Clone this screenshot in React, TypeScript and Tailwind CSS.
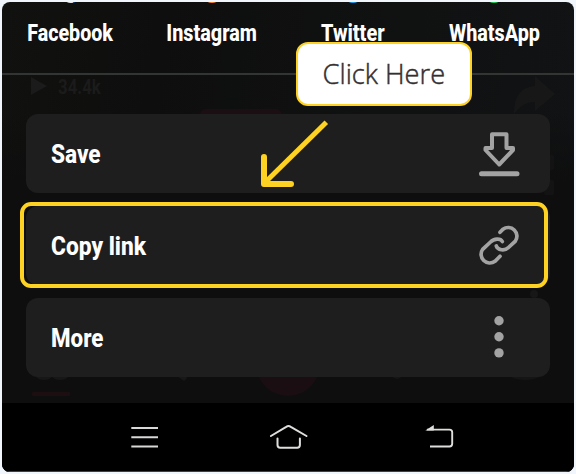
import type { ReactNode } from "react";

const condensed = "inline-block whitespace-nowrap font-['Roboto'] font-extrabold text-white";

function ShareTarget({ name, dot, scale }: { name: string; dot: string; scale: string }) {
  return (
    <div className="relative flex h-full w-[141px] justify-center pt-[18px]">
      <i className={`absolute -top-[19px] left-1/2 size-5 -translate-x-1/2 rounded-full ${dot}`} />
      <span className={`${condensed} h-7 text-[23px] leading-7 ${scale}`}>{name}</span>
    </div>
  );
}

function ActionRow({ label, scale, children }: { label: string; scale: string; children: ReactNode }) {
  return (
    <div className="flex h-[79px] items-center justify-between rounded-[12px] bg-[#1e1e1e] pr-[28px] pl-[25px]">
      <span className={`${condensed} origin-left pt-[2px] text-[25px] leading-8 ${scale}`}>{label}</span>
      {children}
    </div>
  );
}

/** Dimmed video feed controls showing through behind the sheet. */
function FeedBackdrop() {
  return (
    <div className="pointer-events-none absolute inset-0">
      <svg className="absolute inset-0" width="572" height="470" viewBox="2 2 572 470">
        <path d="M31 77l16 9-16 9z" fill="#1b1b1b" />
        <path d="M514 114c0-18 7-27 21-28v-10l20 18-20 17v-9c-9 0-15 4-21 12z" fill="#171717" />
        <rect x="200" y="109" width="82" height="20" rx="6" fill="#1b0f13" />
        <rect x="32" y="392" width="38" height="4" rx="1" fill="#1d0e12" />
        <circle cx="288" cy="364.500" r="31.500" fill="#1b0e12" />
        <ellipse cx="44" cy="376" rx="8" ry="4" fill="#171717" />
        <ellipse cx="60" cy="376" rx="8" ry="4" fill="#171717" />
        <path d="M177 376l7 5 3-3-3-4z" fill="#181818" />
        <ellipse cx="525" cy="370" rx="20" ry="10" fill="#151515" />
        <circle cx="397" cy="374" r="5" fill="#161616" />
        <circle cx="534" cy="294" r="4" fill="#171717" />
        <rect x="544" y="155" width="10" height="15" rx="2" fill="#131313" />
        <rect x="544" y="180" width="10" height="15" rx="2" fill="#131313" />
      </svg>
      <span className="absolute top-[71px] left-[55.500px] origin-left scale-x-[0.84] font-['Roboto'] text-[20px] leading-7 font-bold text-[#1b1b1b]">34.4k</span>
    </div>
  );
}

export default function App() {
  return (
    <div className="h-[474px] w-[576px] overflow-hidden bg-[#f1f6fc] p-[2px]">
      <div className="relative flex h-[470px] flex-col overflow-hidden rounded-[8px] bg-[linear-gradient(100deg,#11110f_0%,#0e0e0e_25%,#101111_60%,#111315_100%)]">
        <div className="absolute inset-x-0 top-[110px] bottom-0 bg-[linear-gradient(180deg,#0e0e0e00_0%,#0e0e0e_20%)]" />
        <FeedBackdrop />

        <header className="relative -ml-[2px] flex h-[73px] shrink-0 border-b-2 border-[#333434]">
          <ShareTarget name="Facebook" dot="bg-[linear-gradient(90deg,#eee_60%,#1778f2_60%)]" scale="scale-x-[0.855]" />
          <ShareTarget name="Instagram" dot="bg-[#f58529]" scale="scale-x-[0.86]" />
          <ShareTarget name="Twitter" dot="bg-[#1da1f2]" scale="scale-x-[0.865]" />
          <ShareTarget name="WhatsApp" dot="bg-[#16d45c]" scale="translate-x-[0.5px] scale-x-[0.86]" />
        </header>

        <main className="relative flex flex-col gap-[13px] px-6 pt-[39px]">
          <ActionRow label="Save" scale="scale-x-[0.905]">
            <svg width="46" height="47" viewBox="476 130 46 47" fill="none" stroke="#a3a3a3" strokeLinecap="round" strokeLinejoin="round">
              <path d="M492 134.300h14.500v13.700h6.500v2l-13.800 14.500-13.700-14.500v-2h6.500z" strokeWidth="4" />
              <path d="M481.500 173.700h35.500" strokeWidth="5" />
            </svg>
          </ActionRow>
          <div className="relative">
            <ActionRow label="Copy link" scale="scale-x-[0.91]">
              <svg width="46" height="47" viewBox="476 222 46 47" fill="none" stroke="#a3a3a3" strokeWidth="3.700" strokeLinecap="round">
                <path d="M500 232.300L503 229.200A8.700 8.700 0 0 1 515.300 241.200L508.500 247.500C504.500 251.500 497.500 250 496.300 246" />
                <path d="M500 256.300L495 261.300A8.700 8.700 0 0 1 482.700 249.300L490.500 242C494 238.300 500.500 238 502.300 241.500" />
              </svg>
            </ActionRow>
            <div className="absolute -top-1 -left-[6px] h-[86px] w-[528px] rounded-[11px] border-4 border-[#fed223]" />
          </div>
          <ActionRow label="More" scale="scale-x-[0.895]">
            <svg width="46" height="47" viewBox="476 314 46 47" fill="#a3a3a3">
              <circle cx="499" cy="320.700" r="4.700" />
              <circle cx="499" cy="336.800" r="4.700" />
              <circle cx="499" cy="352.900" r="4.700" />
            </svg>
          </ActionRow>
        </main>

        <nav className="relative mt-auto flex h-[69px] shrink-0 items-center justify-between border-b border-[#3c4048] bg-black pr-[119px] pl-[128px]">
          <svg width="30" height="30" viewBox="130 422 30 30" stroke="#d8d8d6" strokeWidth="2">
            <path d="M131.300 428h26.700M131.300 437.200h26.700M131.300 446.500h26.700" />
          </svg>
          <svg className="-ml-[6px]" width="40" height="30" viewBox="269 422 40 30" fill="none" stroke="#dededc" strokeWidth="2" strokeLinecap="round">
            <path d="M270.900 436l15.300-9.200q2.300-1.500 4.600 0l15.700 9.200M277.500 438.500v6.500q0 2.700 2.700 2.700h17q2.700 0 2.700-2.700v-6.500" />
          </svg>
          <svg width="32" height="30" viewBox="423 422 32 30" fill="none" stroke="#dededc" strokeWidth="1.900">
            <path d="M427 429.600h22.500q2.700 0 2.700 2.700v11.500q0 2.700-2.700 2.700h-19.500" />
            <path d="M425.300 430.500l8.500-5.500v5.500z" fill="#dededc" stroke="none" />
          </svg>
        </nav>

        <svg className="absolute top-[115px] left-[256px]" width="74" height="76" viewBox="258 117 74 76" fill="none" stroke="#fed223">
          <path d="M326.300 122.200L265.500 182" strokeWidth="5" />
          <path d="M264 157v27h27" strokeWidth="6" strokeLinecap="round" strokeLinejoin="round" />
        </svg>
        <div className="absolute top-[40px] left-[294px] flex h-[64px] w-[176px] items-center justify-center rounded-[12px] border-2 border-[#fed223] bg-white font-['Open_Sans'] text-[27.5px] font-light text-[#352f30]">
          <span className="inline-block scale-x-[0.99] whitespace-nowrap [-webkit-text-stroke:0.45px_#352f30]">Click Here</span>
        </div>
      </div>
    </div>
  );
}
